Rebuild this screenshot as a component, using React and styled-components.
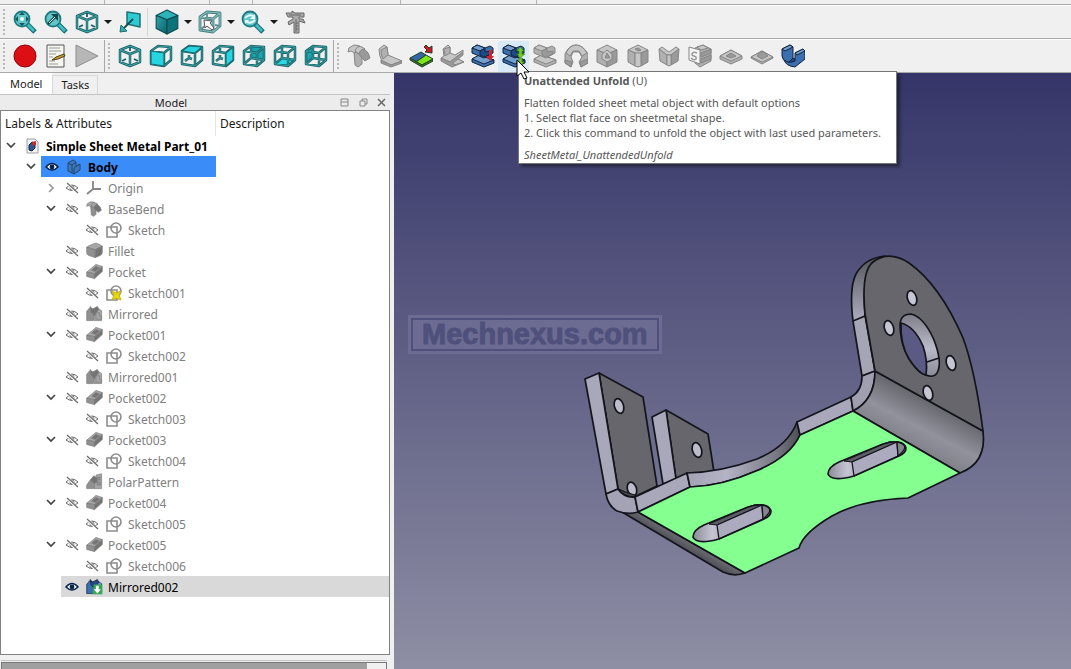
import React from "react";
import styled, { createGlobalStyle } from "styled-components";

const GlobalStyle = createGlobalStyle`
    * {
        box-sizing: border-box;
    }
    body {
        margin: 0;
        background: #f0f0f0;
        color: #1a1a1a;
        font-family: "Noto Sans", "Open Sans", sans-serif;
        font-size: 12px;
        overflow: hidden;
    }
    button {
        margin: 0;
        padding: 0;
        border: 0;
        background: none;
        font: inherit;
        color: inherit;
    }
    svg {
        display: block;
    }
`;

/* ---------- layout ---------- */

const Window = styled.div`
    height: 100vh;
    display: flex;
    flex-direction: column;
`;

const Strip = styled.div`
    flex: none;
    display: grid;
    grid-template-columns: 105px 105px 43px 148px 136px 1fr;
    height: 5px;
    border-bottom: 1px solid #a8a8a8;
`;

const StripPart = styled.div`
    border-right: 1px solid #b4b4b4;

    &:last-child {
        border-right: 0;
    }
`;

const ToolRow = styled.div`
    flex: none;
    display: flex;
    height: 34px;
    border-top: 1px solid #fff;
    border-bottom: 1px solid #a8a8a8;
`;

const ToolGroup = styled.div`
    display: flex;
    align-items: center;
    padding: 0 2px 0 3px;
    border-right: ${props => (props.$last ? "0" : "1px solid #a8a8a8")};
`;

const Grip = styled.span`
    width: 2px;
    height: 26px;
    margin-right: 4px;
    background: repeating-linear-gradient(#b8b8b8 0 2px, transparent 2px 4px);
`;

const ToolButton = styled.button`
    display: flex;
    align-items: center;
    justify-content: center;
    width: 31px;
    height: 31px;
    background: ${props => (props.$hover ? "#d8e9f7" : "none")};
`;

const MenuButton = styled.button`
    display: flex;
    align-items: center;
    justify-content: center;
    width: 12px;
    height: 31px;
`;

const Separator = styled.span`
    width: 2px;
    height: 28px;
    margin: 0 2px;
    border-left: 1px solid #d4d4d4;
`;

const Main = styled.main`
    flex: 1;
    display: flex;
    min-height: 0;
`;

const Dock = styled.aside`
    flex: none;
    display: flex;
    flex-direction: column;
    width: 394px;
    padding-right: 4px;
`;

const Tabs = styled.div`
    flex: none;
    display: flex;
    align-items: flex-end;
    height: 22px;
    border-bottom: 1px solid #c4c4c4;
`;

const Tab = styled.button`
    height: ${props => (props.$active ? "21px" : "19px")};
    padding: 0 8px;
    font-size: 11px;
    line-height: 18px;
    background: ${props => (props.$active ? "#fff" : "#f0f0f0")};
    border: 1px solid #d9d9d9;
    border-width: ${props => (props.$active ? "0" : "1px 1px 0")};

    &:first-child {
        padding: 0 10px;
    }
`;

const DockTitle = styled.div`
    flex: none;
    display: grid;
    grid-template-columns: 1fr 19px 19px 17px;
    align-items: center;
    height: 15px;
    font-size: 11px;
    line-height: 13px;
    text-align: center;
    background: #ececec;
`;

const TitleText = styled.span`
    padding-left: 7px;
`;

const DockButton = styled.button`
    display: flex;
    justify-content: center;
`;

const Tree = styled.section`
    flex: 1;
    min-height: 0;
    background: #fff;
    border: 1px solid #828282;
`;

const TreeHead = styled.div`
    display: grid;
    grid-template-columns: 215px 1fr;
    height: 24px;
    line-height: 25px;
`;

const HeadCell = styled.div`
    padding-left: 4px;
    border-right: 1px solid #e5e5e5;

    &:last-child {
        border-right: 0;
    }
`;

const List = styled.ul`
    margin: 0;
    padding: 0;
    list-style: none;
`;

const Row = styled.li`
    display: grid;
    grid-template-columns: 215px 1fr;
    height: 21px;
`;

const LabelCell = styled.div`
    display: flex;
    align-items: center;
    padding-left: ${props => props.$level * 20}px;
`;

const Toggle = styled.button`
    display: flex;
    justify-content: center;
    flex: none;
    width: 19px;
    margin-right: 1px;
`;

const backgrounds = {
    active: "#3a8cf8",
    selected: "#d9d9d9",
};

const Item = styled.div`
    flex: 1;
    display: flex;
    align-items: center;
    height: 21px;
    line-height: 17px;
    white-space: nowrap;
    color: ${props => (props.$dim ? "#808080" : "#000")};
    font-weight: ${props => (props.$bold ? 700 : 400)};
    background: ${props => backgrounds[props.$mark] || "none"};
`;

const Label = styled.span`
    padding-top: 2px;
`;

const DescriptionCell = styled.div`
    background: ${props => (props.$mark === "selected" ? backgrounds.selected : "none")};
`;

const Eye = styled.button`
    display: flex;
    justify-content: center;
    flex: none;
    width: 22px;
`;

const IconBox = styled.span`
    display: flex;
    justify-content: center;
    flex: none;
    width: 22px;
    margin-right: 3px;
`;

const Properties = styled.div`
    flex: none;
    display: flex;
    height: 9px;
    margin: 5px 3px 0 1px;
    padding: 1px 0 0;
    border-top: 1px solid #c8c8c8;
`;

const PropertiesInner = styled.div`
    flex: 1;
    border: 1px solid #777;
    border-bottom: 0;
    background: linear-gradient(90deg, #a0a0a0 95%, #f0f0f0 95%);
`;

const Viewport = styled.section`
    position: relative;
    flex: 1;
    min-width: 0;
    background: linear-gradient(#353569, #8e8ea4);
`;

const Scene = styled.svg`
    width: 100%;
    height: 100%;
`;

const Watermark = styled.div`
    position: absolute;
    left: 14px;
    top: 242px;
    padding: 2px;
    border: 1px solid #6c6c92;
    background: #6c6c92;
`;

const WatermarkText = styled.div`
    padding: 0 9px;
    border: 2px solid #50507c;
    background: #6c6c92;
    color: #50507c;
    font: bold 29px/29px "Liberation Sans", sans-serif;
    -webkit-text-stroke: 1px #50507c;
`;

const Tooltip = styled.div`
    position: absolute;
    left: 124px;
    top: -2px;
    padding: 1px 15px 0 5px;
    height: 93px;
    border: 1px solid #767676;
    background: #fff;
    box-shadow: 3px 3px 3px rgba(0, 0, 0, 0.4);
    color: #575757;
    font-size: 11px;
    line-height: 15px;
    white-space: nowrap;

    p {
        margin: 0 0 7px;
    }
`;

const Pointer = styled.svg`
    position: absolute;
    left: 122px;
    top: -14px;
`;

/* ---------- icons ---------- */

const shapes = {
    baseBend: [["m", "M7 8L15 10V20L11 23L8 21Z"], ["l", "M1 8L2 4L7 1L13 2L11 5L8 9L4 7Z"], ["d", "M10 8Q12 3 17 5Q22 8 23 14L18 17L15 14Z"], ["l", "M8 7Q10 1 15 3L18 5Q13 5 12 10Z"]],
    wall: [["l", "M1 5L6 1L9 3L10 11L24 17L13 21L4 17Q1 12 1 5Z"], ["m", "M3 6L9 3L10 11L5 15Q3 12 3 6Z"], ["d", "M13 21L24 17V19L13 23L3 19V16Z"]],
    extend: [["b", "M1 14L12 8L17 11L7 18Z"], ["g", "M7 18L17 11L24 15L13 21Z"], ["d", "M1 14L13 21L24 15V17L13 23L1 16Z"], ["r", "M15 3L17 1L20 4L23 2V9L16 8L18 6Z"]],
    fold: [["l", "M3 5L8 1L10 3V9L15 11L23 6V8L10 18L1 14L4 12Z"], ["m", "M4 5L10 3V9L5 12Z"], ["d", "M10 18L23 8V11L18 15L24 18L12 23L1 17V14Z"], ["l", "M13 19L18 15L24 18L14 21Z"]],
    unfold: [["m", "M1 15L9 11L23 16V19L13 23L1 18Z"], ["l", "M1 15L8 11L23 16L13 20Z"], ["m", "M1 4L6 1L14 4L19 2L22 4V9L13 14L1 9Z"], ["l", "M1 4L6 1L14 4L9 7Z"], ["d", "M9 7L14 4V8L20 7V10L13 13L9 11Z"]],
    relief: [["m", "M1 10Q5 1 12 1Q19 1 24 10V19L17 23L15 18L18 13L15 8H9L7 13L9 18L7 23L1 19Z"], ["l", "M2 9Q6 1 12 1Q18 1 23 9L18 12L15 7H9L6 12Z"], ["d", "M1 16L8 18L7 23L1 19ZM16 18L24 15V19L17 23Z"]],
    junction: [["l", "M2 6L12 1L22 6L12 10Z"], ["m", "M2 6L12 10V23L2 18Z"], ["d", "M12 10L22 6V18L12 23Z"], ["l", "M7 10L12 6L17 10V15L12 18L7 15Z"], ["d", "M10 14L12 9L15 14Z"]],
    bend: [["l", "M2 6L12 1L22 6L12 10Z"], ["m", "M2 6L9 9V22L2 18Z"], ["d", "M15 9L22 6V18L15 22Z"], ["l", "M9 9H15V22L12 23L9 22Z"], ["d", "M9 5L12 4L15 6L12 7Z"]],
    corner: [["l", "M2 5L5 3L12 8L19 3L22 5L14 11H10Z"], ["m", "M2 5L10 11V21L3 17Z"], ["d", "M14 11L22 5L21 17L14 21Z"], ["l", "M10 11H14V21L12 22L10 21Z"]],
    forming: [["m", "M7 4L15 1L23 5V17L12 23L7 19Z"], ["l", "M9 3L15 1L20 4L13 6Z"], ["d", "M13 9L23 5V9L13 13ZM13 15L23 11V15L13 19Z"], ["w", "M1 3L12 6V20L1 16Z"]],
    base: [["m", "M1 12L12 6L23 12V15L12 20L1 15Z"], ["l", "M1 12L12 6L23 12L12 17Z"], ["d", "M7 12L12 9L17 12L12 14Z"]],
    stamp: [["m", "M1 13L12 7L23 13V14L12 20L1 14Z"], ["l", "M1 13L12 7L23 13L12 18Z"], ["d", "M7 12L10 8H14L18 12L12 15Z"]],
    wrap: [["m", "M1 5L9 1L12 3V16L7 19Q1 16 1 12Z"], ["l", "M1 5L9 1L12 3L4 7Z"], ["d", "M8 18L12 14L16 16L15 20L10 21Z"], ["m", "M14 9L22 5L24 7V15L14 23Q5 22 3 16Q8 20 14 17Z"], ["l", "M14 9L22 5L24 7L16 11Z"]],
    fillet: [["l", "M1 8Q2 6 5 5L12 2Q15 1 18 3L23 6L13 11Z"], ["m", "M1 7L13 11V22L4 19Q1 18 1 15Z"], ["d", "M13 11L23 6V15Q23 17 20 19L13 22Z"]],
    pocket: [["l", "M1 13L14 2L23 5L12 15Z"], ["m", "M1 13L12 15V22L1 19Z"], ["d", "M12 15L23 5V12L12 22Z"], ["d", "M8 10L14 5L19 7L13 12Z"]],
    mirrored: [["m", "M1 9L5 4L11 6L12 17L10 22H1Z"], ["l", "M12 7L16 4L22 8V22H11V17Z"], ["d", "M6 2L9 6L16 2L18 6L12 15L7 10Z"], ["l", "M14 11H19V16H22V20H14Z"]],
    polar: [["m", "M1 17L6 10L12 13V22H1Z"], ["d", "M6 10L11 4L16 7V13L12 15Z"], ["l", "M14 3L22 1V22H12V15L16 13V7Z"], ["m", "M16 6H20V10H16ZM16 13H20V17H16Z"]],
};

const tones = {
    gray: { l: "#c6c6c6", m: "#b0b0b0", d: "#9a9a9a", w: "#f4f4f4", line: "#868686" },
    dim: { l: "#a6a6a6", m: "#909090", d: "#747474", w: "#eee", line: "#7c7c7c" },
    blue: { l: "#729fcf", m: "#3b6fae", d: "#204a87", w: "#fff", line: "#12233c" },
    extend: { d: "#3c7a18", b: "#3465a4", g: "#7de51c", r: "#cf1820", line: "#24402c" },
};

const Shape = ({ name, tone = "gray", size = 24, children }) => (
    <svg width={size} height={size} viewBox="0 0 24 24" strokeLinejoin="round">
        {shapes[name].map(([fill, d], i) => (
            <path key={i} d={d} fill={tones[tone][fill]} stroke={tones[tone].line} strokeWidth="1" />
        ))}
        {children}
    </svg>
);

const faces = {
    front: "M2 7L15 9V22L2 20Z",
    top: "M2 7L9 2L22 3L15 9Z",
    right: "M15 9L22 3V16L15 22Z",
    rear: "M9 2L22 3V16L9 14Z",
    bottom: "M2 20L9 14L22 16L15 22Z",
    left: "M2 7L9 2V14L2 20Z",
};
const solidFaces = ["front", "top", "right"];
const cubeEdges = "M2 7L15 9V22L2 20ZM2 7L9 2L22 3L15 9M22 3V16L15 22";

const ViewCube = ({ face }) => {
    const solid = solidFaces.includes(face);
    const inner = {
        front: "",
        top: "M9 11V14L5 17M9 14L12 15",
        right: "M9 4V7M9 11V14L5 17M9 14L12 15",
    };
    const lines = cubeEdges + (solid ? inner[face] : "M9 2V14L22 16M9 14L2 20");
    return (
        <svg width="24" height="24" viewBox="0 0 24 24" fill="none" strokeLinejoin="round">
            {!solid && <path d={faces[face]} fill={face === "bottom" ? "#2bd9e4" : "#1aa6b0"} />}
            <path d={lines} stroke="#1a6064" strokeWidth="2.500" />
            <path d={lines} stroke="#37a5a9" strokeWidth="0.900" />
            {solid && <path d={faces[face]} fill="#27d5e2" stroke="#1a6b70" strokeWidth="1.200" />}
        </svg>
    );
};

const isoLines = "M12 2L22 6V18L12 22L2 18V6ZM2 6L12 10L22 6M12 10V22";

const IsoCube = () => (
    <svg width="24" height="24" viewBox="0 0 24 24" fill="none" strokeLinejoin="round">
        <path d={isoLines} stroke="#1a6064" strokeWidth="2.500" />
        <path d={isoLines} stroke="#43b0b3" strokeWidth="0.900" />
        <path d="M12 3V7M4 17L8 15M20 17L16 15" stroke="#1a6064" strokeWidth="1.800" />
    </svg>
);

const SelectCube = () => (
    <svg width="24" height="24" viewBox="0 0 24 24" fill="none" strokeLinejoin="round">
        <path d={cubeEdges} stroke="#4b7c7e" strokeWidth="2.800" />
        <path d={cubeEdges} stroke="#7ebdbf" strokeWidth="1.200" />
        <path d="M9 3V8M17 15L22 16M3 19L7 16" stroke="#5b9193" strokeWidth="1.800" />
        <path d="M6 10L14 11L12 13L16 18L14 20L9 16L7 18Z" fill="#fff" stroke="#555" />
    </svg>
);

const SolidCube = () => (
    <svg width="26" height="26" viewBox="0 0 24 24" strokeLinejoin="round">
        <defs>
            <linearGradient id="solid" x2="1" y2="1">
                <stop stopColor="#2fa6ac" />
                <stop offset="1" stopColor="#0a5f68" />
            </linearGradient>
        </defs>
        <g stroke="#0d4a50">
            <path d="M12 1L22 6L12 10L2 6Z" fill="#2fb3ba" />
            <path d="M2 6L12 10V23L2 18Z" fill="url(#solid)" />
            <path d="M12 10L22 6V18L12 23Z" fill="#0e727a" />
        </g>
    </svg>
);

const Magnifier = ({ children }) => (
    <svg width="24" height="24" viewBox="0 0 24 24" fill="none">
        <path d="M14 14L22 22" stroke="#1c6d72" strokeWidth="5" />
        <path d="M14 14L21 21" stroke="#3cc0c4" strokeWidth="2.800" />
        <circle cx="9" cy="9" r="7.500" fill="#62c6c9" stroke="#1f7b80" strokeWidth="1.800" />
        {children}
    </svg>
);

const FitAll = () => (
    <Magnifier>
        <path d="M9 2L12 5H6ZM9 16L6 13H12ZM2 9L5 6V12ZM16 9L13 12V6Z" fill="#14565a" />
        <circle cx="9" cy="9" r="2" fill="#effcfc" />
    </Magnifier>
);

const FitSelection = () => (
    <Magnifier>
        <path d="M4 14L11 7" stroke="#14484c" strokeWidth="2.500" />
        <path d="M14 4V11L7 4Z" fill="#14484c" />
        <path d="M5 13L11 7" stroke="#d9f6f6" strokeWidth="1" />
    </Magnifier>
);

const SyncView = () => (
    <Magnifier>
        <path d="M4 8Q9 3 13 7M14 10Q9 15 5 11" stroke="#e8fafa" strokeWidth="2" />
        <path d="M14 4V9H9ZM4 14V10H8Z" fill="#e8fafa" />
    </Magnifier>
);

const AlignFace = () => (
    <svg width="24" height="24" viewBox="0 0 24 24" strokeLinejoin="round">
        <path d="M9 2L22 4V17L9 14Z" fill="#2eccd2" stroke="#1d7277" strokeWidth="1.500" />
        <path d="M15 9L6 18" stroke="#174c50" strokeWidth="1.800" />
        <path d="M2 22L3 15L9 21Z" fill="#2bb0b5" stroke="#1d6a6e" />
    </svg>
);

const Caliper = () => (
    <svg width="24" height="24" viewBox="0 0 24 24">
        <path d="M2 3H8V1L11 3H20V7H15V9H19L21 13L15 11V23H10V12L5 15L4 12L9 9V7H4Z" fill="#aaa" stroke="#666" />
        <path d="M12 9V22M5 5H17M12 13H14M12 16H14M12 19H14" stroke="#666" />
    </svg>
);

const Record = () => (
    <svg width="24" height="24" viewBox="0 0 24 24">
        <circle cx="12" cy="12" r="11" fill="#dc0f14" stroke="#8c0509" />
    </svg>
);

const Macro = () => (
    <svg width="24" height="24" viewBox="0 0 24 24">
        <path d="M3 1H20V23H3Z" fill="#f6f6f0" stroke="#555" />
        <path d="M5 4H16M5 7H17M5 10H12M5 13H9M5 17H11M5 20H14" stroke="#999" />
        <path d="M8 16L12 13L20 10L21 12L14 15Z" fill="#c7a032" stroke="#4d3d14" />
    </svg>
);

const Play = () => (
    <svg width="24" height="24" viewBox="0 0 24 24">
        <path d="M1 1L23 12L1 23Z" fill="#b7b7b7" stroke="#8c8c8c" />
    </svg>
);

const MenuArrow = () => (
    <svg width="8" height="4" viewBox="0 0 8 4">
        <path d="M0 0H8L4 4Z" fill="#1a1a1a" />
    </svg>
);

const Chevron = ({ open }) => (
    <svg width="10" height="10" viewBox="0 0 10 10" fill="none">
        <path d={open ? "M1 2L5 6L9 2" : "M3 1L7 5L3 9"} stroke={open ? "#444" : "#999"} strokeWidth="1.700" />
    </svg>
);

const EyeIcon = ({ hidden }) => (
    <svg width="14" height="14" viewBox="0 0 14 14" fill="none">
        {hidden ? (
            <g stroke="#6b6b6b">
                <path d="M1 7Q7 1 13 7Q7 12 1 7Z" />
                <circle cx="7" cy="7" r="2" />
                <path d="M2 2L12 12" stroke="#fff" strokeWidth="2.500" />
                <path d="M2 2L13 12" strokeWidth="1.200" />
            </g>
        ) : (
            <g>
                <path d="M1 7Q7 0 13 7Q7 13 1 7Z" fill="#fff" stroke="#06234a" strokeWidth="1.500" />
                <circle cx="7" cy="7" r="2.400" fill="#06234a" />
            </g>
        )}
    </svg>
);

const SketchIcon = ({ warn }) => (
    <svg width="16" height="16" viewBox="0 0 16 16" fill="none">
        <path d="M1 5H11V15H1Z" stroke="#8c8c8c" strokeWidth="1.600" />
        <circle cx="10" cy="6" r="5" stroke="#8c8c8c" strokeWidth="1.600" />
        {warn && <path d="M6 6L10 8L15 6L13 10L15 15L10 13L6 15L8 10Z" fill="#e8d80c" stroke="#c8b400" />}
    </svg>
);

const OriginIcon = () => (
    <svg width="16" height="16" viewBox="0 0 16 16" fill="none">
        <path d="M7 1V9L1 14M7 9H15" stroke="#868686" strokeWidth="1.800" />
    </svg>
);

const BodyIcon = () => (
    <svg width="16" height="16" viewBox="0 0 16 16" strokeLinejoin="round">
        <g fill="#3b78c0" stroke="#24466f">
            <path d="M2 4L7 1L10 3V7L14 5V11L8 15L2 12Z" />
            <path d="M2 4L6 6V14M6 6L10 3M8 15V9L14 5" fill="none" />
        </g>
    </svg>
);

const DocumentIcon = () => (
    <svg width="16" height="16" viewBox="0 0 16 16">
        <path d="M3 1H11L14 4V15H3Z" fill="#f3f4f6" stroke="#9a9ea5" />
        <path d="M5 7L8 4L11 5V10L8 13L5 12Z" fill="#2b5590" stroke="#17263c" />
        <path d="M8 4L12 3V7L9 8Z" fill="#d02525" />
    </svg>
);

const treeIcons = {
    document: <DocumentIcon />,
    body: <BodyIcon />,
    origin: <OriginIcon />,
    bend: <Shape name="baseBend" tone="dim" size={16} />,
    sketch: <SketchIcon />,
    sketchWarn: <SketchIcon warn />,
    fillet: <Shape name="fillet" tone="dim" size={17} />,
    pocket: <Shape name="pocket" tone="dim" size={17} />,
    mirrored: <Shape name="mirrored" tone="dim" size={17} />,
    polar: <Shape name="polar" tone="dim" size={17} />,
    tip: (
        <Shape name="mirrored" tone="blue" size={17}>
            <path d="M11 9H23V23H9Z" fill="#35a853" />
            <path d="M14 11H18V16H21L16 22L11 16H14Z" fill="#fff" />
        </Shape>
    ),
};

/* ---------- data ---------- */

const views = ["front", "top", "right", "rear", "bottom", "left"];

const sheetTools = [
    { title: "Make Base Wall", name: "baseBend" },
    { title: "Make Wall", name: "wall" },
    { title: "Extend Face", name: "extend", tone: "extend" },
    { title: "Fold a Wall", name: "fold" },
    { title: "Unfold", name: "unfold", tone: "blue", overlay: <path d="M18 6H21V12H23L19 17L15 12H18Z" fill="#d0252e" /> },
    {
        title: "Unattended Unfold",
        name: "unfold",
        tone: "blue",
        hover: true,
        overlay: <path d="M18 3L22 7H20V10H23L18 14L15 10H17V7H15ZM17 14H20V18H22L18 23L14 18H17Z" fill="#6fce1c" stroke="#35780c" strokeWidth="0.500" />,
    },
    { title: "Make Rip", name: "unfold" },
    { title: "Make Relief", name: "relief" },
    { title: "Make Corner Relief", name: "junction" },
    { title: "Make Junction", name: "bend" },
    { title: "Make Bend", name: "corner" },
    { title: "Sketch on Sheet Metal", name: "forming", overlay: <path d="M9 9Q5 7 4 10Q4 12 6 12Q9 13 8 15Q6 17 3 14" fill="none" stroke="#999" strokeWidth="1.500" /> },
    { title: "Make Base Shape", name: "base" },
    { title: "Forming in Wall", name: "stamp" },
    { title: "Base Shape", name: "wrap", tone: "blue" },
];

const tree = [
    { label: "Simple Sheet Metal Part_01", level: 0, icon: "document", open: true, bold: true, noEye: true },
    { label: "Body", level: 1, icon: "body", open: true, bold: true, shown: true, mark: "active" },
    { label: "Origin", level: 2, icon: "origin", open: false },
    { label: "BaseBend", level: 2, icon: "bend", open: true },
    { label: "Sketch", level: 3, icon: "sketch" },
    { label: "Fillet", level: 2, icon: "fillet" },
    { label: "Pocket", level: 2, icon: "pocket", open: true },
    { label: "Sketch001", level: 3, icon: "sketchWarn" },
    { label: "Mirrored", level: 2, icon: "mirrored" },
    { label: "Pocket001", level: 2, icon: "pocket", open: true },
    { label: "Sketch002", level: 3, icon: "sketch" },
    { label: "Mirrored001", level: 2, icon: "mirrored" },
    { label: "Pocket002", level: 2, icon: "pocket", open: true },
    { label: "Sketch003", level: 3, icon: "sketch" },
    { label: "Pocket003", level: 2, icon: "pocket", open: true },
    { label: "Sketch004", level: 3, icon: "sketch" },
    { label: "PolarPattern", level: 2, icon: "polar" },
    { label: "Pocket004", level: 2, icon: "pocket", open: true },
    { label: "Sketch005", level: 3, icon: "sketch" },
    { label: "Pocket005", level: 2, icon: "pocket", open: true },
    { label: "Sketch006", level: 3, icon: "sketch" },
    { label: "Mirrored002", level: 2, icon: "tip", shown: true, mark: "selected" },
];

/* ---------- parts ---------- */

const Tool = ({ title, hover, children }) => (
    <ToolButton type="button" aria-label={title} $hover={hover}>
        {children}
    </ToolButton>
);

const Menu = ({ title }) => (
    <MenuButton type="button" aria-label={title}>
        <MenuArrow />
    </MenuButton>
);

const TreeRow = ({ label, level, icon, open, bold, noEye, shown, mark }) => (
    <Row>
        <LabelCell $level={level}>
            {open === undefined ? (
                <Toggle as="span" />
            ) : (
                <Toggle type="button" aria-label={`Toggle ${label}`}>
                    <Chevron open={open} />
                </Toggle>
            )}
            <Item $mark={mark} $bold={bold} $dim={!shown && !noEye}>
                {!noEye && (
                    <Eye type="button" aria-label={`Visibility of ${label}`}>
                        <EyeIcon hidden={!shown} />
                    </Eye>
                )}
                <IconBox>{treeIcons[icon]}</IconBox>
                <Label>{label}</Label>
            </Item>
        </LabelCell>
        <DescriptionCell $mark={mark} />
    </Row>
);

const slotOutline = "M693 537Q693 530 704 525L748 507Q768 501 771 511Q771 516 764 519L719 539Q696 545 693 537Z";

const Slot = ({ x = 0, y = 0 }) => (
    <g transform={`translate(${x} ${y})`}>
        <path d={slotOutline} fill="url(#slotEnd)" stroke="none" />
        <path d="M709 524L748 507Q756 503 762 505L717 525Z" fill="#5d5d66" strokeWidth="1" />
        <path d="M717 525L762 505L763 519L719 539Z" fill="#abaabe" strokeWidth="1.300" />
        <path d="M762 505Q777 508 763 519Z" fill="#85858f" strokeWidth="1.300" />
        <path d={slotOutline} fill="none" />
    </g>
);

const Part = () => (
    <Scene viewBox="394 73 677 596" stroke="#14141c" strokeWidth="1.700" strokeLinejoin="round">
        <defs>
            <linearGradient id="roll" gradientUnits="userSpaceOnUse" x1="930" y1="401" x2="908" y2="443">
                <stop stopColor="#66666d" />
                <stop offset="0.600" stopColor="#92929d" />
                <stop offset="1" stopColor="#82828b" />
            </linearGradient>
            <linearGradient id="under" gradientUnits="userSpaceOnUse" x1="690" y1="541" x2="682" y2="555">
                <stop stopColor="#6d6d75" />
                <stop offset="1" stopColor="#3c3c43" />
            </linearGradient>
            <linearGradient id="slotEnd">
                <stop stopColor="#8c8c98" />
                <stop offset="0.250" stopColor="#c6c5d4" />
                <stop offset="0.500" stopColor="#9695a3" />
            </linearGradient>
            <linearGradient id="arc">
                <stop stopColor="#a4a3b6" />
                <stop offset="0.350" stopColor="#b4b3c6" />
                <stop offset="0.800" stopColor="#777782" />
                <stop offset="1" stopColor="#4d4d55" />
            </linearGradient>
            <linearGradient id="rim" x2="0" y2="1">
                <stop stopColor="#55555c" />
                <stop offset="0.500" stopColor="#a6a5b6" />
            </linearGradient>
            <linearGradient id="bore" x2="0" y2="1">
                <stop stopColor="#7d7d87" />
                <stop offset="0.550" stopColor="#bbbaca" />
                <stop offset="1" stopColor="#8b8b96" />
            </linearGradient>
        </defs>

        {/* rear tab */}
        <path d="M666 410L708 434L714 472L690 476L676 479Z" fill="#66666c" />
        <path d="M652 417L666 410L676 479L663 484Z" fill="#a9a8ba" />
        <ellipse cx="697" cy="450" rx="4.500" ry="7.500" transform="rotate(-18 697 450)" fill="#bdbcca" />

        {/* front tab */}
        <path d="M599 373L643 397L657 486L634 497L618 489Z" fill="#66666c" />
        <path d="M585 379L599 373L618 489L606 494Z" fill="#a9a8ba" />
        <ellipse cx="619" cy="406" rx="4.500" ry="7.500" transform="rotate(-18 619 406)" fill="#bdbcca" />
        <ellipse cx="632" cy="489" rx="4.500" ry="7" transform="rotate(-18 632 489)" fill="#bdbcca" />
        <path d="M618 489Q624 492 635 495V497Q624 497 618 489Z" fill="#44444a" strokeWidth="1" />

        {/* bends and rim of the base */}
        <path d="M622 512L638 512L745 573Q734 577 723 572Z" fill="url(#under)" />
        <path d="M606 494L618 489Q624 498 635 497L638 512Q628 515 617 511Q608 506 606 494Z" fill="#a4a3b5" />
        <path d="M635 497L687 473L690 487L638 512Z" fill="#a9a8ba" />
        <path d="M687 473Q722 472 757 459Q788 446 797 422L800 435Q790 457 756 471Q722 486 690 487Z" fill="url(#arc)" />
        <path d="M797 422L851 397L853 411L800 435Z" fill="#a9a8ba" />

        {/* upright plate */}
        <path d="M885 256Q865 258 856 274Q849 288 853 321L862 376L875 371L865 315Q862 275 873 262Z" fill="url(#rim)" />
        <path d="M862 376Q862 391 851 397L853 411Q875 400 875 371Z" fill="#a09fb0" />
        <path d="M875 371L983 431Q987 463 960 473L853 411Q875 400 875 371Z" fill="url(#roll)" />
        <path d="M875 371L865 314Q861 271 873 262Q889 250 909 263Q940 285 963 338Q975 370 983 431Z" fill="#66666c" />
        <path d="M853 321L865 316" />
        <g fill="#c6c5d2">
            <ellipse cx="912" cy="298" rx="4.500" ry="7.500" transform="rotate(-18 912 298)" />
            <ellipse cx="889" cy="328" rx="4.500" ry="7.500" transform="rotate(-18 889 328)" />
            <ellipse cx="951" cy="363" rx="4.500" ry="7.500" transform="rotate(-18 951 363)" />
            <ellipse cx="928" cy="393" rx="4.500" ry="7.500" transform="rotate(-18 928 393)" />
        </g>
        <path d="M900 326Q900 314 911 314Q924 317 934 340Q942 361 938 371Q934 381 920 372Q901 355 900 326Z" fill="url(#bore)" />
        <path d="M901 323Q914 326 923 346Q928 361 926 375Q919 374 909 359Q900 344 901 323Z" fill="#5a5a85" />
        <path d="M927 362L939 358" />

        {/* selected flat face */}
        <path d="M853 411L800 435Q790 457 756 471Q722 486 690 487L638 512L745 573L799 548Q803 533 832 516Q860 500 908 498L960 473Z" fill="#86ff91" />
        <Slot />
        <Slot x={135} y={-63} />
    </Scene>
);

export default function App() {
    return (
        <Window>
            <GlobalStyle />
            <Strip>
                {[0, 1, 2, 3, 4, 5].map(i => (
                    <StripPart key={i} />
                ))}
            </Strip>
            <ToolRow>
                <ToolGroup $last>
                    <Grip />
                    <Tool title="Fit all"><FitAll /></Tool>
                    <Tool title="Fit selection"><FitSelection /></Tool>
                    <Tool title="Isometric"><IsoCube /></Tool>
                    <Menu title="More views" />
                    <Tool title="Align to selection"><AlignFace /></Tool>
                    <Separator />
                    <Tool title="Draw style"><SolidCube /></Tool>
                    <Menu title="Draw styles" />
                    <Tool title="Selection"><SelectCube /></Tool>
                    <Menu title="Selection filters" />
                    <Tool title="Sync view"><SyncView /></Tool>
                    <Menu title="Link views" />
                    <Tool title="Measure"><Caliper /></Tool>
                </ToolGroup>
            </ToolRow>
            <ToolRow>
                <ToolGroup>
                    <Grip />
                    <Tool title="Record macro"><Record /></Tool>
                    <Tool title="Macros"><Macro /></Tool>
                    <Tool title="Run macro"><Play /></Tool>
                </ToolGroup>
                <ToolGroup>
                    <Grip />
                    <Tool title="Axonometric"><IsoCube /></Tool>
                    {views.map(v => (
                        <Tool key={v} title={`View ${v}`}><ViewCube face={v} /></Tool>
                    ))}
                </ToolGroup>
                <ToolGroup $last>
                    <Grip />
                    {sheetTools.map(t => (
                        <Tool key={t.title} title={t.title} hover={t.hover}>
                            <Shape name={t.name} tone={t.tone}>{t.overlay}</Shape>
                        </Tool>
                    ))}
                </ToolGroup>
            </ToolRow>
            <Main>
                <Dock>
                    <Tabs>
                        <Tab type="button" $active>Model</Tab>
                        <Tab type="button">Tasks</Tab>
                    </Tabs>
                    <DockTitle>
                        <TitleText>Model</TitleText>
                        <DockButton type="button" aria-label="Collapse">
                            <svg width="9" height="9" viewBox="0 0 9 9" fill="none" stroke="#888">
                                <path d="M1 1H8V8H1ZM1 4H8" />
                            </svg>
                        </DockButton>
                        <DockButton type="button" aria-label="Float">
                            <svg width="9" height="9" viewBox="0 0 9 9" fill="none" stroke="#888">
                                <path d="M3 3V1H8V6H6M1 3H6V8H1Z" />
                            </svg>
                        </DockButton>
                        <DockButton type="button" aria-label="Close">
                            <svg width="9" height="9" viewBox="0 0 9 9" stroke="#666" strokeWidth="1.500">
                                <path d="M1 1L8 8M8 1L1 8" />
                            </svg>
                        </DockButton>
                    </DockTitle>
                    <Tree>
                        <TreeHead>
                            <HeadCell>Labels &amp; Attributes</HeadCell>
                            <HeadCell>Description</HeadCell>
                        </TreeHead>
                        <List>
                            {tree.map(item => (
                                <TreeRow key={item.label} {...item} />
                            ))}
                        </List>
                    </Tree>
                    <Properties>
                        <PropertiesInner />
                    </Properties>
                </Dock>
                <Viewport>
                    <Part />
                    <Watermark>
                        <WatermarkText>Mechnexus.com</WatermarkText>
                    </Watermark>
                    <Tooltip role="tooltip">
                        <p><b>Unattended Unfold</b> (U)</p>
                        <p>
                            Flatten folded sheet metal object with default options
                            <br />
                            1. Select flat face on sheetmetal shape.
                            <br />
                            2. Click this command to unfold the object with last used parameters.
                        </p>
                        <i>SheetMetal_UnattendedUnfold</i>
                    </Tooltip>
                    <Pointer width="14" height="22" viewBox="0 0 14 22">
                        <path d="M1 1V17L5 14L8 20L11 19L8 13H13Z" fill="#fff" stroke="#000" />
                    </Pointer>
                </Viewport>
            </Main>
        </Window>
    );
}
